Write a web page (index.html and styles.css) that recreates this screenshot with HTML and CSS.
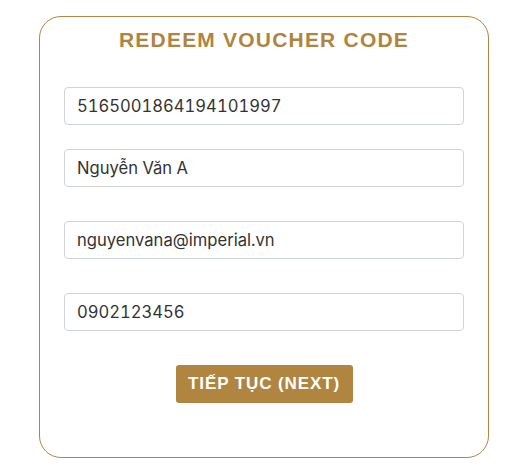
FILE: index.html
```html
<!DOCTYPE html>
<html lang="vi">
<head>
  <meta charset="UTF-8" />
  <meta name="viewport" content="width=device-width, initial-scale=1.0"/>
  <title>Redeem Voucher Code</title>
  <link rel="stylesheet" href="styles.css">
</head>
<body>
  <div class="voucher-box">
    <h1>REDEEM VOUCHER CODE</h1>
    <form class="voucher-form">
      <div class="field first">
        <input type="text" value="5165001864194101997">
      </div>
      <div class="field">
        <input type="text" value="Nguyễn Văn A">
      </div>
      <div class="field">
        <input type="email" value="nguyenvana@imperial.vn">
      </div>
      <div class="field">
        <input type="tel" value="0902123456">
      </div>
      <div class="actions">
        <button type="button">TIẾP TỤC (NEXT)</button>
      </div>
    </form>
  </div>
</body>
</html>
```

FILE: styles.css
```css
body {
  margin: 0;
  padding: 16px 0 0 39px;
  background: #fff;
  font-family: 'Inter', sans-serif;
}

.voucher-box {
  width: 448px;
  height: 440px;
  border: 1px solid #b08540;
  border-radius: 22px;
}

h1 {
  margin: 11px 0 0;
  text-align: center;
  font-family: 'Liberation Sans', Arial, sans-serif;
  font-size: 21px;
  font-weight: bold;
  letter-spacing: 1.2px;
  color: #b0843f;
  line-height: 24px;
}

.voucher-form {
  padding: 0 24px;
  margin-top: 35px;
}

.field {
  margin-top: 34px;
}

.field.first {
  margin-top: 0;
}

.field:nth-child(2) {
  margin-top: 24px;
}

.field input {
  display: block;
  width: 100%;
  height: 38px;
  box-sizing: border-box;
  padding: 0 12px;
  border: 1px solid #ced4da;
  border-radius: 4px;
  font-family: 'Inter', sans-serif;
  font-size: 16.6px;
  font-feature-settings: 'tnum';
  color: #333;
  background: #fff;
}

.actions {
  text-align: center;
  margin-top: 34px;
}

.actions button {
  width: 177px;
  height: 38px;
  border: none;
  border-radius: 3px;
  background: #b08540;
  color: #fff;
  font-family: 'Liberation Sans', Arial, sans-serif;
  font-size: 17px;
  font-weight: bold;
  letter-spacing: 0.9px;
  cursor: pointer;
}
```
